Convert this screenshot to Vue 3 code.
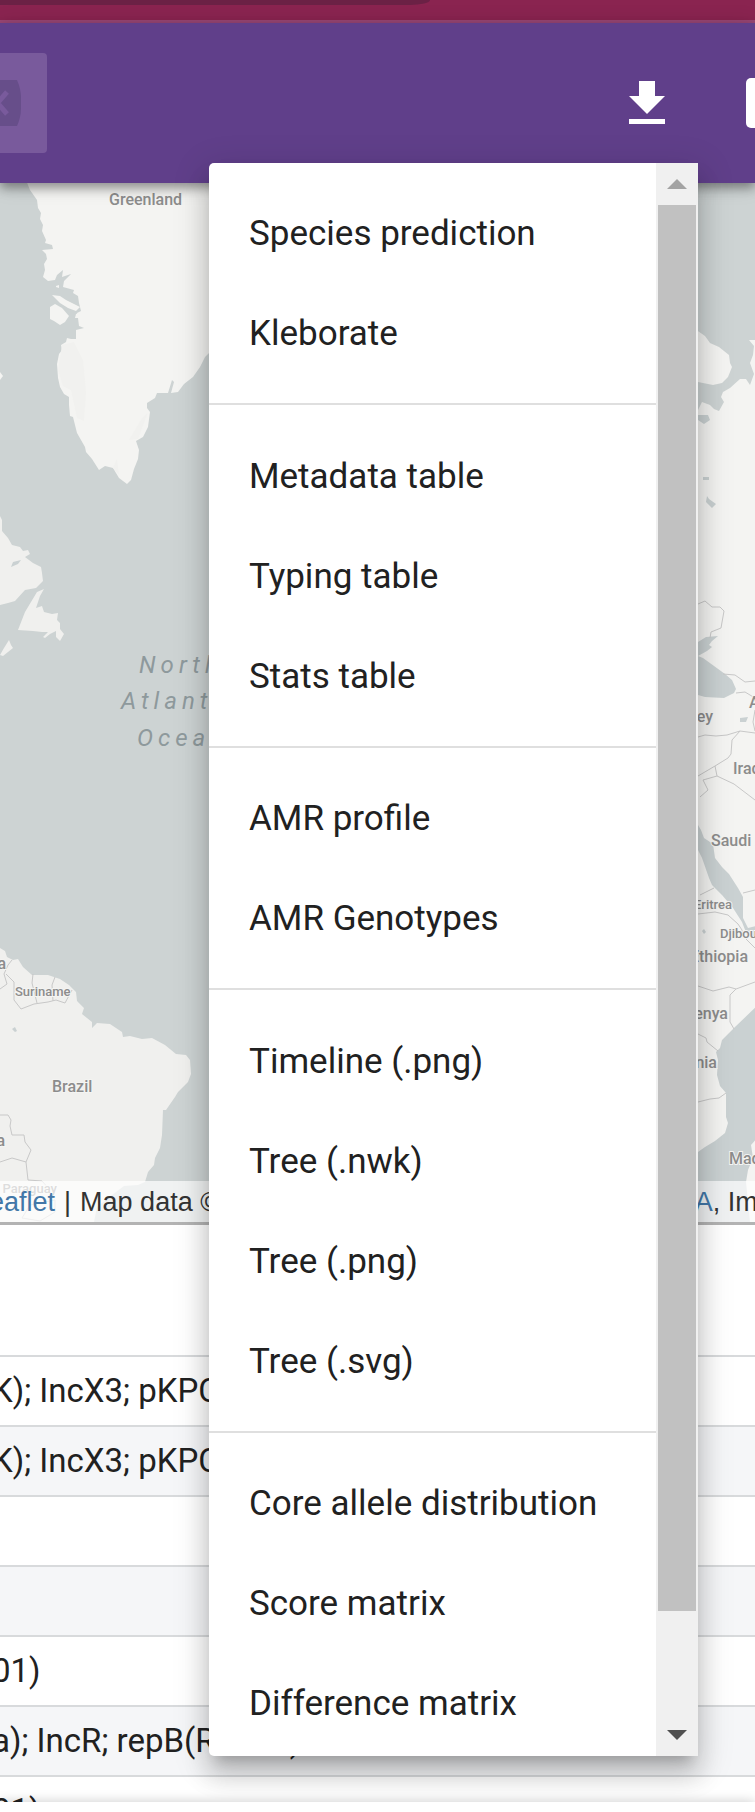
<script setup>
const groups = [
  ['Species prediction', 'Kleborate'],
  ['Metadata table', 'Typing table', 'Stats table'],
  ['AMR profile', 'AMR Genotypes'],
  ['Timeline (.png)', 'Tree (.nwk)', 'Tree (.png)', 'Tree (.svg)'],
  ['Core allele distribution', 'Score matrix', 'Difference matrix'],
]

const rows = [
  'K); IncX3; pKPC',
  'K); IncX3; pKPC',
  '',
  '',
  '01)',
  'a); IncR; repB(R1701)',
  '01)',
]
</script>

<template>
  <div class="page">
    <div class="browser-bar"><div class="tab"></div></div>

    <header class="toolbar">
      <div class="search">
        <button class="clear" aria-label="Clear search">
          <svg width="22" height="46" viewBox="0 0 22 46">
            <path class="chip" d="M0 0H17Q21 9 21 18V28Q21 37 17 46H0Z" />
            <path class="cross" d="M-12 12L7 34M7 12L-12 34" />
          </svg>
        </button>
      </div>
      <div class="actions">
        <button class="icon" aria-label="Download">
          <svg width="36" height="44" viewBox="0 0 36 44">
            <path d="M10 0H26V15H36L18 33L0 15H10ZM0 38H36V43H0Z" fill="#fff" />
          </svg>
        </button>
        <button class="icon" aria-label="View">
          <svg width="40" height="50" viewBox="0 0 40 50">
            <rect width="50" height="50" rx="5" fill="#fff" />
          </svg>
        </button>
      </div>
    </header>

    <section class="map" aria-label="Map">
      <svg class="tiles" viewBox="0 183 755 1039" preserveAspectRatio="xMidYMin slice">
        <g class="land">
          <path d="M26 180L30 190L37 200L38 208L41 213L40 219L43 225L42 231L46 240L45 243L52 245L53 249L42 250L46 254L47 259L44 264L45 270L43 277L48 281L55 280L57 275L63 270L62 277L71 274L64 281L63 287L74 290L73 293L78 296L79 303L81 311L77 313L78 318L79 326L84 328L76 330L76 339L71 339L67 338L66 342L61 345L62 350L59 354L57 364L58 378L60 387L64 394L69 397L69 405L70 416L73 417L77 433L85 447L86 452L92 459L99 470L105 466L113 468L119 478L127 484L131 480L134 469L138 459L139 450L136 441L143 437L148 427L150 412L147 408L147 403L155 398L157 393L168 393L172 380L174 382L171 393L178 392L184 384L193 377L200 367L205 357L212 350V180Z" />
          <path d="M52 295L60 296L66 300L80 307L76 311L68 308L60 303Z" />
          <path d="M50 307L55 304L62 308L69 316L65 322L60 325L54 321L50 319Z" />
          <path d="M56 286L59 285L59 288L56 287ZM76 314L79 313L78 318L75 318ZM0 372L3 376L0 380Z" />
          <path d="M695 329L705 336L710 343L719 347L724 351L729 355L730 363L732 367L728 377L722 383L713 385L698 382H695Z" />
          <path d="M760 340H749L754 346L753 355L750 363L754 374L750 385L746 379L740 379L730 388L723 392L721 397L724 402L719 411L714 409L710 405L702 402L698 410H690V1222H760Z" />
        </g>
        <g class="lowland">
          <path d="M0 516L2 520L2 531L8 538L12 545L20 547L23 551L28 550L30 554L25 557L33 563L41 567L42 573L43 581L36 588L25 590L15 601L8 603L0 605Z" />
          <path d="M18 630L25 612L31 602L37 592L44 589L40 596L36 608L42 606L44 612L52 614L58 613L57 620L60 623L60 629L64 634L60 641L56 637L56 631L50 634L45 638L43 637L48 632L42 632L33 631Z" />
          <path d="M9 640L11 645L13 648L8 652L3 656L0 655L4 648Z" />
          <path d="M0 948L5 951L7 957L13 960L18 959L23 967L32 975L48 975L60 979L69 985L76 992L77 1001L84 1008L82 1014L92 1022L92 1028L97 1023L110 1024L122 1032L123 1037L130 1036L142 1039L152 1038L165 1045L176 1054L186 1055L190 1060L191 1074L188 1082L178 1092L175 1097L166 1110L163 1110L162 1135L160 1148L155 1158L154 1165L148 1172L145 1182L138 1185L124 1186L112 1195L97 1207L94 1222H0Z" />
        </g>
        <g class="relief">
          <path d="M62 345L74 342L83 360L86 392L84 421L77 418L71 390L63 386L58 370ZM129 440L141 420L148 412L138 439ZM113 468L117 459L119 475Z" />
        </g>
        <g class="water">
          <path d="M11 567L13 562L21 560L18 564ZM12 1029L15 1027L17 1031L15 1032Z" />
          <path d="M698 415L708 415L710 420L704 424L698 420ZM703 477H709V480H703ZM707 496L709 499L716 504L712 508L706 502Z" />
          <path d="M698 642L706 637L718 636L712 641L709 645L712 647L707 651L698 656ZM698 656L703 658L714 666L725 674L732 680L736 689L734 693L724 698L705 697L698 695Z" />
          <path d="M740 718L748 717L746 722L740 722ZM702 931L704 929L706 932L704 934Z" />
          <path d="M698 825L701 830L704 838L713 844L715 858L722 867L729 874L738 888L743 897L743 918L748 928L760 925V938L747 935L742 922L733 908L722 895L712 885L709 878L702 858L698 850Z" />
          <path d="M760 1003L735 1027L722 1040L720 1048L716 1052L718 1060L717 1075L720 1086L726 1093L726 1117L728 1123L725 1133L715 1141L705 1147L698 1152V1222H760Z" />
        </g>
        <path class="land" d="M760 1135L751 1145L753 1158L748 1170L746 1182L750 1222H760Z" />
        <g class="borders">
          <path d="M0 989L7 984L4 974L8 965L12 960M6 974L14 982L14 1000L21 1009L34 1004L48 1002L56 1000L65 1003L72 990M33 974L32 983L37 1003M55 977L52 985L53 1001" />
          <path d="M0 1115L8 1115L11 1120L10 1126L12 1135H24L25 1142L31 1150L26 1162L12 1158L0 1162M26 1162L28 1180L42 1181L50 1190M22 1218L30 1205L55 1200V1212L40 1221Z" />
          <path d="M698 604L705 601L712 607L720 607L724 611L721 628L711 632L710 638M723 674L735 675L745 682L755 681M736 693L745 692L755 698M698 737L705 735L716 736L727 735L740 731L755 733M740 731L732 740L731 754L728 758L715 766L698 776M715 766L717 776L734 784L755 800M717 776L703 780L708 790L700 797M755 710L753 722L755 731M743 893L755 890" />
          <path d="M700 895L714 888M698 914L715 912L728 915L738 924L742 930L742 935L755 948M698 986L713 991L729 987L736 989L755 982M736 989L730 995V1022L734 1029M698 1034L706 1038L707 1042L718 1051M698 1102L710 1099L719 1098L726 1093" />
        </g>
        <g class="labels">
          <text x="109" y="205">Greenland</text>
          <text x="52" y="1092">Brazil</text>
          <text x="6" y="969" text-anchor="end">a</text>
          <text x="5" y="1146" text-anchor="end">a</text>
          <text x="57" y="1193" text-anchor="end" class="small">Paraguay</text>
          <text x="15" y="996" class="small">Suriname</text>
          <text x="713" y="722" text-anchor="end">Turkey</text>
          <text x="749" y="708">A</text>
          <text x="733" y="774">Iraq</text>
          <text x="711" y="846">Saudi Arabia</text>
          <text x="732" y="909" text-anchor="end" class="small">Eritrea</text>
          <text x="720" y="938" class="small">Djibouti</text>
          <text x="748" y="962" text-anchor="end">Ethiopia</text>
          <text x="728" y="1019" text-anchor="end">Kenya</text>
          <text x="717" y="1068" text-anchor="end">Tanzania</text>
          <text x="729" y="1164">Madagascar</text>
        </g>
        <g class="ocean">
          <text x="139" y="673">North</text>
          <text x="121" y="709">Atlantic</text>
          <text x="137" y="746">Ocean</text>
        </g>
      </svg>
      <div class="attribution">
        <a href="#">Leaflet</a><span>|</span><span>Map data ©</span>
        <a href="#">OpenStreetMap</a><span>contributors,</span>
        <span><a href="#">CC-BY-SA</a>, Imagery</span>
      </div>
    </section>

    <main class="data">
      <table>
        <thead><tr><th aria-label="Replicons"></th></tr></thead>
        <tbody>
          <tr v-for="(row, i) in rows" :key="i"><td>{{ row }}</td></tr>
        </tbody>
      </table>
    </main>
    <footer class="footer"></footer>

    <div class="menu">
      <div class="items" role="menu">
        <div v-for="(group, g) in groups" :key="g" class="group" role="group">
          <button v-for="item in group" :key="item" class="item" role="menuitem">{{ item }}</button>
        </div>
      </div>
      <div class="scrollbar">
        <button class="arrow" aria-label="Scroll up">
          <svg width="20" height="10" viewBox="0 0 20 10"><path d="M0 10L10 0L20 10Z" fill="#a3a3a3" /></svg>
        </button>
        <div class="track"><div class="thumb"></div></div>
        <button class="arrow" aria-label="Scroll down">
          <svg width="20" height="10" viewBox="0 0 20 10"><path d="M0 0H20L10 10Z" fill="#505050" /></svg>
        </button>
      </div>
    </div>
  </div>
</template>

<style>
body {
  margin: 0;
}
</style>

<style scoped>
.page {
  position: relative;
  display: flex;
  flex-direction: column;
  height: 100vh;
  overflow: hidden;
  background: #fff;
  color: #212121;
  font-family: Roboto, "Liberation Sans", sans-serif;
}
button {
  margin: 0;
  padding: 0;
  border: 0;
  background: none;
  color: inherit;
  font: inherit;
}
svg {
  display: block;
}
.browser-bar {
  flex: none;
  height: 20px;
  background: #8a2450;
  border-bottom: 3px solid #9b4776;
}
.tab {
  width: 57%;
  height: 5px;
  background: #6b2145;
  border-bottom-right-radius: 20px 5px;
}
.toolbar {
  position: relative;
  z-index: 1;
  flex: none;
  display: flex;
  align-items: center;
  justify-content: space-between;
  height: 160px;
  background: #603f8a;
  box-shadow: 0 5px 10px rgba(0, 0, 0, 0.35), 0 2px 20px rgba(0, 0, 0, 0.15);
}
.search {
  display: flex;
  align-items: center;
  width: 47px;
  height: 100px;
  border-radius: 0 4px 4px 0;
  background: #795a9c;
}
.chip {
  fill: #674e8a;
}
.cross {
  fill: none;
  stroke: #795a9c;
  stroke-width: 5;
}
.actions {
  display: flex;
  align-items: center;
  gap: 81px;
  margin-right: -31px;
}
.map {
  position: relative;
  flex: none;
  height: 1039px;
  overflow: hidden;
  background: #cdd3d3;
  border-bottom: 3px solid #b3b3b3;
}
.tiles {
  width: 100%;
  height: 100%;
}
.land {
  fill: #f4f4f2;
}
.lowland {
  fill: #f0f0ee;
}
.relief {
  fill: #f1f1ef;
}
.water {
  fill: #cad1d2;
}
.borders {
  fill: none;
  stroke: #c8c8c8;
  stroke-width: 1;
}
.labels {
  fill: #8c8c8c;
  stroke: #f4f4f2;
  stroke-width: 2;
  paint-order: stroke;
  font-size: 16px;
  font-weight: 500;
}
.labels .small {
  font-size: 13px;
}
.ocean {
  fill: #8e999c;
  font-size: 24px;
  font-style: italic;
  letter-spacing: 5px;
}
.attribution {
  position: absolute;
  right: 0;
  bottom: 0;
  left: 0;
  display: flex;
  gap: 9px;
  box-sizing: border-box;
  height: 41px;
  margin-left: -26px;
  overflow: hidden;
  background: rgba(255, 255, 255, 0.7);
  color: #333;
  font-family: "Liberation Sans", Arial, sans-serif;
  font-size: 27px;
  line-height: 42px;
  white-space: nowrap;
}
.attribution a {
  color: #4277a8;
  text-decoration: none;
}
.data {
  flex: 1;
  min-height: 0;
  overflow: hidden;
}
table {
  width: 100%;
  border-collapse: separate;
  border-spacing: 0;
}
th {
  height: 130px;
  padding: 0;
}
td {
  box-sizing: border-box;
  height: 70px;
  padding: 0;
  border-top: 2px solid #d8dadc;
  font-size: 33px;
  line-height: 68px;
  text-indent: -8px;
  white-space: nowrap;
}
tbody tr:nth-child(even) {
  background: #f5f6f8;
}
.footer {
  z-index: 1;
  flex: none;
  height: 10px;
  background: #fff;
  box-shadow: 0 0 12px rgba(0, 0, 0, 0.22);
}
.menu {
  position: absolute;
  z-index: 2;
  top: 163px;
  right: 57px;
  display: flex;
  width: 489px;
  overflow: hidden;
  border-radius: 5px 0 0 5px;
  background: #fff;
  box-shadow: 0 12px 12px -8px rgba(0, 0, 0, 0.2), 0 20px 25px 2px rgba(0, 0, 0, 0.14), 0 8px 35px 5px rgba(0, 0, 0, 0.12);
}
.items {
  flex: 1;
}
.group {
  padding: 20px 0;
}
.group + .group {
  border-top: 2px solid #dfdfdf;
}
.group:nth-child(even) {
  padding-top: 21px;
}
.group:last-child {
  padding-bottom: 3px;
}
.item {
  display: block;
  width: 100%;
  height: 100px;
  padding-top: 2px;
  padding-left: 40px;
  font-size: 35px;
  line-height: 98px;
  text-align: left;
}
.scrollbar {
  display: flex;
  flex: none;
  flex-direction: column;
  width: 42px;
  background: #f0f0f0;
}
.arrow {
  display: flex;
  align-items: center;
  justify-content: center;
  height: 42px;
}
.track {
  flex: 1;
  padding: 0 2px;
}
.thumb {
  height: 93.2%;
  background: #c1c1c1;
}
</style>
